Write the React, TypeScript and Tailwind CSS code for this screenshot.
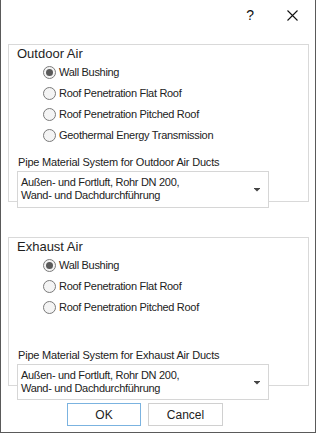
import React, { useState } from 'react';

type RadioProps = { label: string; checked: boolean; onSelect: () => void };

const Radio: React.FC<RadioProps> = ({ label, checked, onSelect }) => (
  <div className="h-[21px] flex items-center pl-[34px] cursor-default" onClick={onSelect}>
    <span className="w-[13px] h-[13px] rounded-full border border-[#7a7a7a] bg-[#f4f4f4] flex items-center justify-center shrink-0">
      {checked && <span className="w-[7px] h-[7px] rounded-full bg-[#5a5a5a]" />}
    </span>
    <span className="ml-[3px] text-[11px] tracking-[-0.3px] text-[#222]">{label}</span>
  </div>
);

const Dropdown: React.FC<{ className?: string }> = ({ className = '' }) => (
  <div className={`relative ml-[8px] w-[252px] bg-white border border-[#d6d6d6] pl-[3px] pt-[4px] text-[11px] leading-[13px] tracking-[-0.3px] text-[#222] ${className}`}>
    <div>Außen- und Fortluft, Rohr DN 200,</div>
    <div>Wand- und Dachdurchführung</div>
    <svg className="absolute right-[8px] top-[16px]" width="6" height="4" viewBox="0 0 6 4">
      <rect x="0" y="0" width="6" height="1" fill="#444" />
      <polygon points="0.5,1 5.5,1 3,3.6" fill="#444" />
    </svg>
  </div>
);

const outdoorOptions = [
  'Wall Bushing',
  'Roof Penetration Flat Roof',
  'Roof Penetration Pitched Roof',
  'Geothermal Energy Transmission',
];

const exhaustOptions = ['Wall Bushing', 'Roof Penetration Flat Roof', 'Roof Penetration Pitched Roof'];

export default function App() {
  const [outdoor, setOutdoor] = useState(0);
  const [exhaust, setExhaust] = useState(0);

  return (
    <div className="w-[316px] h-[433px] bg-white border-l border-r border-b border-[#5a5a5a] font-['Liberation_Sans',Arial,sans-serif] text-[#222] overflow-hidden">
      {/* title bar */}
      <div className="h-[44px] flex items-start justify-end pt-[6px]">
        <span className="text-[14px] leading-[18px] text-[#111] mr-[33px]">?</span>
        <svg className="mt-[4px] mr-[17px]" width="11" height="11" viewBox="0 0 11 11">
          <path d="M0.5 0.5 L10.5 10.5 M10.5 0.5 L0.5 10.5" stroke="#111" strokeWidth="1.1" />
        </svg>
      </div>

      {/* Outdoor Air */}
      <div className="ml-[7px] w-[301px] h-[158px] border border-[#d9d9d9]">
        <div className="pl-[8px] pt-[1px] text-[13px] leading-[16px] text-[#1e1e1e]">Outdoor Air</div>
        {outdoorOptions.map((o, i) => (
          <Radio key={o} label={o} checked={outdoor === i} onSelect={() => setOutdoor(i)} />
        ))}
        <div className="mt-[9px] pl-[9px] text-[11px] leading-[14px] tracking-[-0.2px]">
          Pipe Material System for Outdoor Air Ducts
        </div>
        <Dropdown className="mt-[2px] h-[37px]" />
      </div>

      {/* Exhaust Air */}
      <div className="mt-[35px] ml-[7px] w-[301px] h-[149px] border border-[#d9d9d9]">
        <div className="pl-[8px] pt-[1px] text-[13px] leading-[16px] text-[#1e1e1e]">Exhaust Air</div>
        {exhaustOptions.map((o, i) => (
          <Radio key={o} label={o} checked={exhaust === i} onSelect={() => setExhaust(i)} />
        ))}
        <div className="mt-[30px] pl-[9px] text-[11px] leading-[14px] tracking-[-0.2px]">
          Pipe Material System for Exhaust Air Ducts
        </div>
        <Dropdown className="mt-[2px] h-[36px]" />
      </div>

      {/* buttons */}
      <div className="mt-[17px] flex gap-[7px] pl-[66px]">
        <button className="w-[74px] h-[23px] border border-[#7bb3e0] bg-white text-[12px] text-[#222]">OK</button>
        <button className="w-[75px] h-[23px] border border-[#d0d0d0] bg-white text-[12px] text-[#222]">Cancel</button>
      </div>
    </div>
  );
}
